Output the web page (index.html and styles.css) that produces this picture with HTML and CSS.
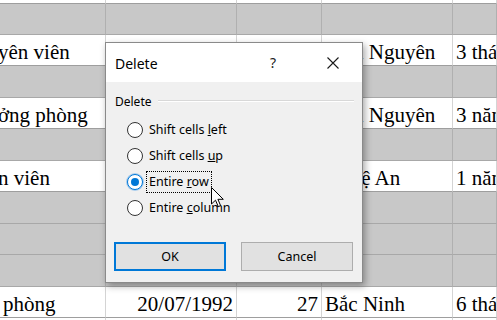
FILE: index.html
```html
<!DOCTYPE html>
<html>
<head>
<meta charset="utf-8">
<link rel="stylesheet" href="styles.css">
</head>
<body>
<div class="sheet">
  <div class="row r-top white"><div class="c"></div><div class="c"></div><div class="c"></div><div class="c"></div><div class="c"></div></div>
  <div class="row r31 gray"><div class="c"></div><div class="c"></div><div class="c"></div><div class="c"></div><div class="c"></div></div>
  <div class="row r31 white"><div class="c t clip">yên viên</div><div class="c"></div><div class="c"></div><div class="c t">Thái Nguyên</div><div class="c t">3 tháng</div></div>
  <div class="row r32 gray"><div class="c"></div><div class="c"></div><div class="c"></div><div class="c"></div><div class="c"></div></div>
  <div class="row r31 white"><div class="c t clip">ởng phòng</div><div class="c"></div><div class="c"></div><div class="c t">Thái Nguyên</div><div class="c t">3 năm</div></div>
  <div class="row r32 gray"><div class="c"></div><div class="c"></div><div class="c"></div><div class="c"></div><div class="c"></div></div>
  <div class="row r31 white"><div class="c t clip">n viên</div><div class="c"></div><div class="c"></div><div class="c t">Nghệ An</div><div class="c t">1 năm</div></div>
  <div class="row r32 gray"><div class="c"></div><div class="c"></div><div class="c"></div><div class="c"></div><div class="c"></div></div>
  <div class="row r31 gray"><div class="c"></div><div class="c"></div><div class="c"></div><div class="c"></div><div class="c"></div></div>
  <div class="row r32 gray"><div class="c"></div><div class="c"></div><div class="c"></div><div class="c"></div><div class="c"></div></div>
  <div class="row r31 white"><div class="c t">phòng</div><div class="c t num">20/07/1992</div><div class="c t num">27</div><div class="c t">Bắc Ninh</div><div class="c t">6 tháng</div></div>
  <div class="row r-bot white"><div class="c"></div><div class="c"></div><div class="c"></div><div class="c"></div><div class="c"></div></div>
</div>

<div class="dialog">
  <div class="titlebar">
    <span class="title">Delete</span>
    <span class="help">?</span>
    <span class="close"><svg width="12" height="12" viewBox="0 0 12 12"><path d="M0.5 0.5 L11.5 11.5 M11.5 0.5 L0.5 11.5" stroke="#1a1a1a" stroke-width="1.1" fill="none"/></svg></span>
  </div>
  <div class="body">
    <div class="group-head"><span class="group-label">Delete</span><span class="group-line"></span></div>
    <div class="options">
      <div class="opt"><span class="radio"></span><span class="lbl">Shift cells <u>l</u>eft</span></div>
      <div class="opt"><span class="radio"></span><span class="lbl">Shift cells <u>u</u>p</span></div>
      <div class="opt"><span class="radio on"></span><span class="lbl focus">Entire <u>r</u>ow</span></div>
      <div class="opt"><span class="radio"></span><span class="lbl">Entire <u>c</u>olumn</span></div>
    </div>
    <div class="buttons">
      <div class="btn default">OK</div>
      <div class="btn">Cancel</div>
    </div>
  </div>
</div>

<svg class="cursor" width="14" height="21" viewBox="0 0 14 21"><path d="M0.5 0.5 L0.5 17 L4.5 13.2 L7.3 19.6 L9.6 18.6 L6.9 12.3 L12.3 12.3 Z" fill="#fff" stroke="#000" stroke-width="1" stroke-linejoin="miter"/></svg>
</body>
</html>
```

FILE: styles.css
```css
* { box-sizing: border-box; }
html, body { margin: 0; padding: 0; }
body {
  width: 497px;
  height: 320px;
  overflow: hidden;
  position: relative;
  background: #fff;
}
.sheet {
  display: flex;
  flex-direction: column;
}
.row {
  display: grid;
  grid-template-columns: 106px 131px 85px 131px 1fr;
}
.r-top { height: 4px; }
.r31 { height: 31px; }
.r32 { height: 32px; }
.r-bot { height: 10px; }
.c {
  border-right: 1px solid #d4d4d4;
  border-bottom: 1px solid #9e9e9e;
  overflow: hidden;
  white-space: nowrap;
}
.gray .c {
  background: #c8c8c8;
  border-right-color: #b0b0b0;
  border-bottom-color: #a8a8a8;
}
.t {
  font-family: "Liberation Serif", "Times New Roman", serif;
  font-size: 21px;
  line-height: 24px;
  color: #000;
  display: flex;
  align-items: flex-end;
  padding: 0 3px 1px 3px;
}
.clip { padding-left: 0; text-indent: -2px; }
.num { justify-content: flex-end; }

.dialog {
  position: absolute;
  left: 105px;
  top: 42px;
  width: 258px;
  height: 241px;
  border: 1px solid #8a8a8a;
  background: #f0f0f0;
  box-shadow: 2px 3px 7px rgba(0,0,0,0.35);
  font-family: "Noto Sans", "Segoe UI", sans-serif;
  color: #000;
  display: flex;
  flex-direction: column;
}
.titlebar {
  height: 39px;
  background: #fff;
  display: flex;
  align-items: center;
  padding-left: 9px;
}
.title {
  font-size: 14px;
  flex: 1;
  padding-top: 1px;
}
.help {
  font-size: 14px;
  width: 20px;
  margin-right: 21px;
  text-align: center;
  color: #222;
}
.close {
  width: 58px;
  display: flex;
  justify-content: center;
}
.close svg { display: block; }
.body {
  flex: 1;
  display: flex;
  flex-direction: column;
  padding: 10px 8px 0 8px;
}
.group-head {
  display: flex;
  align-items: center;
  height: 18px;
  padding-left: 1px;
}
.group-label { font-size: 12px; }
.group-line {
  flex: 1;
  height: 2px;
  margin-left: 6px;
  border-top: 1px solid #d8d8d8;
  border-bottom: 1px solid #fff;
}
.options {
  display: flex;
  flex-direction: column;
  gap: 8px;
  padding: 11px 0 0 13px;
}
.opt {
  display: flex;
  align-items: center;
  height: 18px;
}
.radio {
  width: 16px;
  height: 16px;
  border-radius: 50%;
  border: 1px solid #333;
  background: #fff;
  flex: none;
  display: flex;
  align-items: center;
  justify-content: center;
}
.radio.on {
  border: 1.5px solid #0078d7;
  box-shadow: 0 0 0 1px #a9cdee;
}
.radio.on::after {
  content: "";
  width: 8px;
  height: 8px;
  border-radius: 50%;
  background: #0078d7;
}
.lbl {
  font-size: 12.5px;
  margin-left: 3px;
  padding: 1px 2px 2px 2px;
  border: 1px solid transparent;
  line-height: 17px;
}
.lbl.focus { border: 1px dotted #000; }
.buttons {
  display: flex;
  gap: 15px;
  margin-top: 25px;
}
.btn {
  width: 112px;
  height: 29px;
  background: #e1e1e1;
  border: 1px solid #adadad;
  font-size: 12.5px;
  display: flex;
  align-items: center;
  justify-content: center;
}
.btn.default { border: 2px solid #0078d7; }
.cursor {
  position: absolute;
  left: 211px;
  top: 187px;
}
```
